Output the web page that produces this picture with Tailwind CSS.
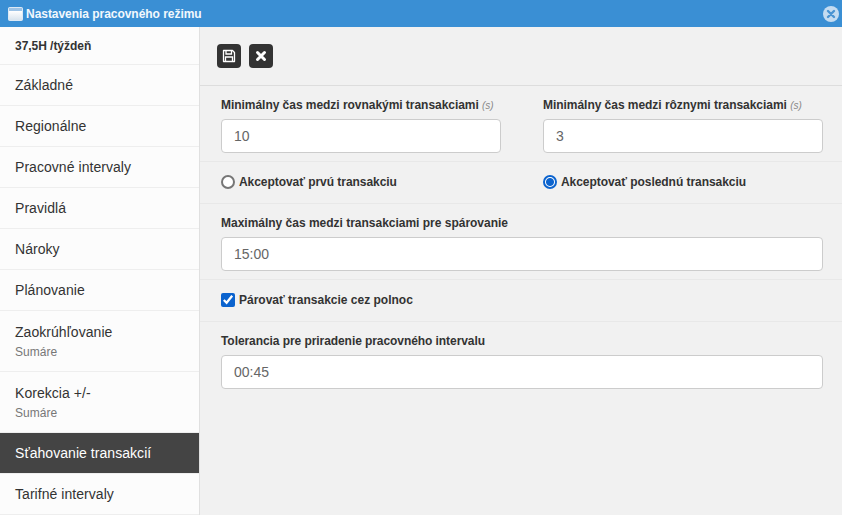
<!DOCTYPE html>
<html lang="sk">
<head>
<meta charset="utf-8">
<script src="https://cdn.jsdelivr.net/npm/@tailwindcss/browser@4"></script>
</head>
<body class="m-0 w-[842px] h-[515px] overflow-hidden bg-[#f1f1f1] font-['Liberation_Sans',Arial,sans-serif] text-[#333]">
<header class="h-[27px] bg-[#3a8fd4] flex items-center pl-2 pr-[3px] text-white">
  <svg width="15" height="14" viewBox="0 0 15 14" class="shrink-0"><rect x="0.5" y="0.5" width="14" height="13" rx="1" fill="#f4f8fc" stroke="#dce9f5"/><rect x="1" y="1" width="13" height="3" fill="#9cc3e6"/><rect x="1" y="4" width="13" height="9" fill="url(#g)"/><defs><linearGradient id="g" x1="0" y1="0" x2="0" y2="1"><stop offset="0" stop-color="#ffffff"/><stop offset="1" stop-color="#d8e4ee"/></linearGradient></defs></svg>
  <span class="ml-[3px] text-[12px] font-bold leading-none tracking-[-0.04px] text-[#f2f8fd]">Nastavenia pracovného režimu</span>
  <span class="ml-auto w-4 h-4 rounded-full bg-[#c4dcf1] flex items-center justify-center">
    <svg width="10" height="10" viewBox="0 0 10 10"><path d="M2 2 8 8M8 2 2 8" stroke="#4a94d2" stroke-width="2.4" stroke-linecap="round"/></svg>
  </span>
</header>
<div class="flex h-[488px]">
  <aside class="w-[200px] shrink-0 bg-white border-r border-[#e0e0e0] text-[14px] leading-none tracking-[0.05px]">
    <div class="h-[38px] flex items-center pl-[15px] text-[12px] font-bold tracking-[-0.04px] border-b border-[#eee] bg-[#fcfcfc]">37,5H /týždeň</div>
    <div class="h-[41px] flex items-center pl-[15px] border-b border-[#eee] bg-[#fcfcfc]">Základné</div>
    <div class="h-[41px] flex items-center pl-[15px] border-b border-[#eee] bg-[#fcfcfc]">Regionálne</div>
    <div class="h-[41px] flex items-center pl-[15px] border-b border-[#eee] bg-[#fcfcfc]">Pracovné intervaly</div>
    <div class="h-[41px] flex items-center pl-[15px] border-b border-[#eee] bg-[#fcfcfc]">Pravidlá</div>
    <div class="h-[41px] flex items-center pl-[15px] border-b border-[#eee] bg-[#fcfcfc]">Nároky</div>
    <div class="h-[41px] flex items-center pl-[15px] border-b border-[#eee] bg-[#fcfcfc]">Plánovanie</div>
    <div class="h-[61px] flex flex-col justify-center gap-[7px] pl-[15px] border-b border-[#eee] bg-[#fcfcfc]">
      <span>Zaokrúhľovanie</span><span class="text-[12px] text-[#777]">Sumáre</span>
    </div>
    <div class="h-[61px] flex flex-col justify-center gap-[7px] pl-[15px] border-b border-[#eee] bg-[#fcfcfc]">
      <span>Korekcia +/-</span><span class="text-[12px] text-[#777]">Sumáre</span>
    </div>
    <div class="h-[41px] flex items-center pl-[15px] border-b border-[#eee] bg-[#444] text-white">Sťahovanie transakcií</div>
    <div class="h-[41px] flex items-center pl-[15px] border-b border-[#eee] bg-[#fcfcfc]">Tarifné intervaly</div>
  </aside>
  <main class="flex-1 min-w-0">
    <div class="h-[59px] flex items-center gap-2 pl-[17px] border-b border-[#ddd]">
      <button class="w-6 h-6 rounded bg-[#333] flex items-center justify-center" aria-label="Uložiť">
        <svg width="14" height="14" viewBox="0 0 14 14" fill="none" stroke="#fff" stroke-width="1.3"><path d="M1.5 1.5h9l2 2v9h-11z" stroke-linejoin="round"/><path d="M4 1.5v3.5h5.5v-3.5M3.5 12.5v-4.5h7v4.5"/></svg>
      </button>
      <button class="w-6 h-6 rounded bg-[#333] flex items-center justify-center" aria-label="Zavrieť">
        <svg width="12" height="12" viewBox="0 0 12 12"><path d="M2.5 2.5 9.5 9.5M9.5 2.5 2.5 9.5" stroke="#fff" stroke-width="3" stroke-linecap="round"/></svg>
      </button>
    </div>
    <div class="h-[76px] grid grid-cols-[280px_280px] gap-x-[42px] pl-[21px] border-b border-[#e8e8e8]">
      <div>
        <div class="h-[33px] flex items-end pb-[8px] text-[12px] font-bold leading-none tracking-[-0.04px]">Minimálny čas medzi rovnakými transakciami&nbsp;<i class="text-[10px] font-normal text-[#888]">(s)</i></div>
        <input value="10" class="w-full h-[34px] bg-white border border-[#ccc] rounded px-3 text-[14px] text-[#666]">
      </div>
      <div>
        <div class="h-[33px] flex items-end pb-[8px] text-[12px] font-bold leading-none tracking-[-0.04px]">Minimálny čas medzi rôznymi transakciami&nbsp;<i class="text-[10px] font-normal text-[#888]">(s)</i></div>
        <input value="3" class="w-full h-[34px] bg-white border border-[#ccc] rounded px-3 text-[14px] text-[#666]">
      </div>
    </div>
    <div class="h-[42px] grid grid-cols-[280px_280px] gap-x-[42px] pl-[21px] pb-[2px] border-b border-[#e8e8e8] text-[12px] font-bold tracking-[-0.05px]">
      <label class="flex items-center gap-[4px]"><input type="radio" name="a" class="m-0 w-[14px] h-[14px] appearance-none rounded-full border-2 border-[#767676] bg-white">Akceptovať prvú transakciu</label>
      <label class="flex items-center gap-[4px]"><input type="radio" name="a" checked class="m-0 w-[14px] h-[14px] appearance-none rounded-full border-2 border-[#0b63ce] bg-[radial-gradient(circle,#0b63ce_3.5px,#fff_4.5px)]">Akceptovať poslednú transakciu</label>
    </div>
    <div class="h-[76px] pl-[21px] border-b border-[#e8e8e8]">
      <div class="h-[33px] flex items-end pb-[8px] text-[12px] font-bold leading-none tracking-[-0.01px]">Maximálny čas medzi transakciami pre spárovanie</div>
      <input value="15:00" class="w-[602px] h-[34px] bg-white border border-[#ccc] rounded px-3 text-[14px] text-[#666]">
    </div>
    <div class="h-[42px] flex items-center pl-[21px] pb-[2px] border-b border-[#e8e8e8] text-[12px] font-bold">
      <label class="flex items-center gap-[4px]"><input type="checkbox" checked class="m-0 w-[14px] h-[14px] accent-[#0b63ce]">Párovať transakcie cez polnoc</label>
    </div>
    <div class="pl-[21px]">
      <div class="h-[33px] flex items-end pb-[8px] text-[12px] font-bold leading-none tracking-[-0.07px]">Tolerancia pre priradenie pracovného intervalu</div>
      <input value="00:45" class="w-[602px] h-[34px] bg-white border border-[#ccc] rounded px-3 text-[14px] text-[#666]">
    </div>
  </main>
</div>
</body>
</html>
